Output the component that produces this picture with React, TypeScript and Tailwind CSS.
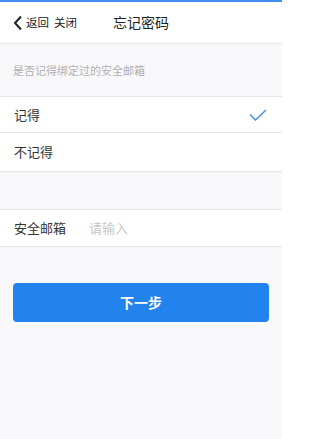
export default function App() {
  return (
    <div
      className="w-[282px] h-[439px] overflow-hidden bg-[#f8f8fa] flex flex-col"
      style={{ fontFamily: '"Noto Sans CJK SC", "Noto Sans", sans-serif' }}
    >
      <div className="h-[2px] bg-[#3f8cf0]" />
      <div className="relative h-[42px] bg-white border-b border-[#e8e8e8] flex items-center">
        <div className="flex items-center pl-[13px]">
          <svg width="10" height="16" viewBox="0 0 10 16" fill="none">
            <path d="M8 1.5 L2 8 L8 14.5" stroke="#222" strokeWidth="2" />
          </svg>
          <span className="ml-[3px] text-[11.5px] text-[#222]">返回</span>
          <span className="ml-[5px] text-[11.5px] text-[#222]">关闭</span>
        </div>
        <span className="absolute left-1/2 -translate-x-1/2 text-[14px] text-[#222]">忘记密码</span>
      </div>
      <div className="h-[53px] px-[13px] flex items-center text-[11px] text-[#b0b0b0] border-b border-[#e6e6e6]">
        是否记得绑定过的安全邮箱
      </div>
      <div className="bg-white">
        <div className="h-[36px] px-[14px] flex items-center justify-between border-b border-[#e6e6e6]">
          <span className="text-[13px] text-[#333]">记得</span>
          <svg width="18" height="12" viewBox="0 0 18 12" fill="none" className="mr-[1px]">
            <path d="M1 5.5 L6.5 11 L17 1" stroke="#4a90e2" strokeWidth="1.5" />
          </svg>
        </div>
        <div className="h-[39px] px-[14px] flex items-center border-b border-[#e6e6e6]">
          <span className="text-[13px] text-[#333]">不记得</span>
        </div>
      </div>
      <div className="h-[38px] border-b border-[#e6e6e6]" />
      <div className="h-[37px] bg-white px-[14px] flex items-center border-b border-[#e6e6e6]">
        <span className="text-[13px] text-[#333] w-[75px]">安全邮箱</span>
        <span className="text-[13px] text-[#c8c8c8]">请输入</span>
      </div>
      <div className="px-[13px] pt-[36px]">
        <button className="w-full h-[39px] rounded-[4px] bg-[#2383ee] text-white text-[14px] font-bold">
          下一步
        </button>
      </div>
    </div>
  );
}
